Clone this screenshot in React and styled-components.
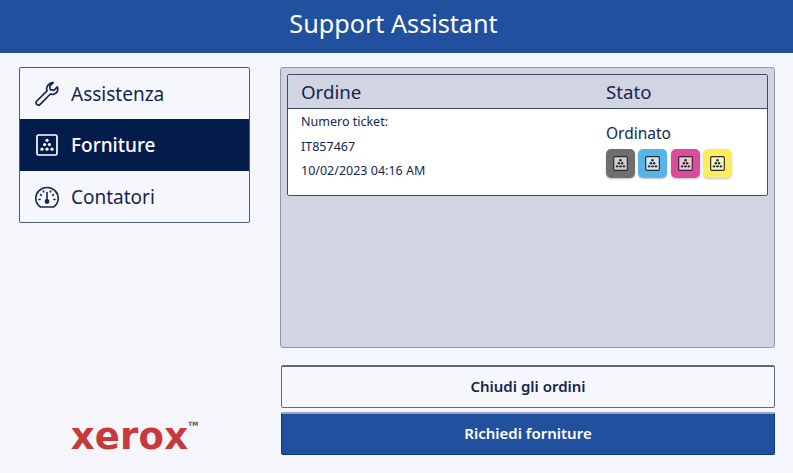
import React from 'react';
import styled, { createGlobalStyle } from 'styled-components';

const GlobalStyle = createGlobalStyle`
  html, body {
    margin: 0;
    padding: 0;
    height: 100%;
    background: #f5f6fb;
  }
  body {
    font-family: 'Noto Sans', 'Open Sans', sans-serif;
    color: #14264f;
  }
`;

const Page = styled.div`
  width: 793px;
  height: 473px;
  overflow: hidden;
  background: #f5f6fb;
`;

const Header = styled.header`
  height: 53px;
  padding-right: 6px;
  box-sizing: border-box;
  background: #20509e;
  color: #fff;
  font-size: 25.2px;
  line-height: 47px;
  text-align: center;
`;

const Body = styled.div`
  display: flex;
  padding: 14px 18px 0 19px;
  gap: 30px;
`;

const Left = styled.aside`
  width: 231px;
  height: 392px;
  display: flex;
  flex-direction: column;
  justify-content: space-between;
  align-items: center;
`;

const Menu = styled.nav`
  width: 100%;
  box-sizing: border-box;
  border: 1px solid #4b5a78;
  border-radius: 2px;
  background: #f6f7fc;
`;

const MenuItem = styled.div`
  height: ${p => (p.$active ? 52 : 51)}px;
  display: flex;
  align-items: center;
  gap: 11px;
  padding-left: 14px;
  font-size: 19px;
  font-weight: ${p => (p.$active ? 500 : 400)};
  color: ${p => (p.$active ? '#fff' : '#14264f')};
  background: ${p => (p.$active ? '#041c4c' : 'transparent')};
`;

const IconSlot = styled.span`
  width: 26px;
  height: 26px;
  display: flex;
  align-items: center;
  justify-content: center;
`;

const Logo = styled.div`
  display: flex;
  align-items: flex-start;
  color: #c8393c;
  font-family: 'DejaVu Sans', sans-serif;
  font-weight: 700;
  font-size: 37px;
  line-height: 40px;
  letter-spacing: 0.2px;
  margin-bottom: 2px;
`;

const Trademark = styled.span`
  color: #555;
  font-size: 6px;
  line-height: 14px;
  letter-spacing: 0;
`;

const Right = styled.main`
  flex: 1;
  display: flex;
  flex-direction: column;
`;

const Panel = styled.section`
  height: 281px;
  box-sizing: border-box;
  padding: 6px;
  background: #d1d5e1;
  border: 1px solid #8f97a9;
  border-radius: 3px;
`;

const Table = styled.div`
  border: 1px solid #3f4a63;
  border-radius: 2px;
  background: #fff;
`;

const Row = styled.div`
  display: grid;
  grid-template-columns: 305px 1fr;
  padding-left: 13px;
`;

const HeadRow = styled(Row)`
  height: 33px;
  align-items: center;
  background: #d1d5e1;
  border-bottom: 1px solid #3f4a63;
  font-size: 18.7px;
`;

const BodyRow = styled(Row)`
  height: 86px;
`;

const TicketInfo = styled.div`
  font-size: 12.5px;
  line-height: 24.5px;
  padding-top: 1px;
  color: #14264f;
`;

const Status = styled.div`
  padding-top: 13px;
  font-size: 15.5px;
  line-height: 22px;
`;

const Chips = styled.div`
  display: flex;
  gap: 3.3px;
  margin-top: 5px;
`;

const Chip = styled.div`
  width: 29px;
  height: 29px;
  border-radius: 5px;
  display: flex;
  align-items: center;
  justify-content: center;
  background: ${p => p.$color};
  box-shadow: 0 1px 2px rgba(0, 0, 0, 0.25);
`;

const Buttons = styled.div`
  display: flex;
  flex-direction: column;
  gap: 4px;
  margin-top: 17px;
  padding-left: 1px;
`;

const Button = styled.button`
  height: 43px;
  padding: 0 0 2px;
  box-sizing: border-box;
  border-radius: 2px;
  border: 1px solid ${p => (p.$primary ? '#163a78' : '#5d6880')};
  border-top: 2px solid ${p => (p.$primary ? '#9aa6bd' : '#5d6880')};
  background: ${p => (p.$primary ? '#20509e' : '#f6f7fc')};
  color: ${p => (p.$primary ? '#fff' : '#14264f')};
  font-family: inherit;
  font-size: 15px;
  font-weight: 600;
`;

const WrenchIcon = () => (
  <svg width="26" height="26" viewBox="0 0 26 26" fill="none" stroke="#14264f" strokeWidth="1.7" strokeLinejoin="round">
    <path d="M19.2 1.600l-3.400 3.500.5 3.600 3.600.6 3.500-3.400c.9 2.600.1 5-1.600 6.300-1.600 1.300-3.600 1.500-5.400.8L6.200 23.300c-1 1-2.500 1-3.400.1-1-.9-1-2.400 0-3.400L13 9.800c-.7-2-.3-4.200 1.200-5.900 1.300-1.600 3-2.600 5-2.300z" />
  </svg>
);

const SupplyIcon = ({ size = 22, color = '#14264f', fill = 'none', dot = 1.6 }) => (
  <svg width={size} height={size} viewBox="0 0 22 22">
    <rect x="1" y="1" width="20" height="20" rx="1.500" fill={fill} stroke={color} strokeWidth="1.700" />
    <g fill={color}>
      <circle cx="11" cy="6.300" r={dot} />
      <circle cx="8.600" cy="10.600" r={dot} />
      <circle cx="13.400" cy="10.600" r={dot} />
      <circle cx="6" cy="15.200" r={dot} />
      <circle cx="11" cy="15.200" r={dot} />
      <circle cx="16" cy="15.200" r={dot} />
    </g>
  </svg>
);

const GaugeIcon = () => (
  <svg width="26" height="26" viewBox="0 0 26 26" fill="none" stroke="#14264f" strokeWidth="1.600" strokeLinecap="round">
    <path d="M6.500 23C3.700 21.100 1.800 18 1.800 14.500 1.800 8.300 6.800 3.500 13 3.500s11.200 4.800 11.200 11c0 3.500-1.900 6.600-4.700 8.500z" />
    <path d="M13 16V8.500" />
    <circle cx="13" cy="17.500" r="1.600" fill="#14264f" />
    <path d="M6.500 10.500l.9.800M5 15.500h1.100M19.500 10.500l-.9.800M21 15.500h-1.100M9.300 7l.4.800M16.700 7l-.4.800" />
  </svg>
);

const chips = [
  { color: '#6e6e6e', fill: '#cfcfcf' },
  { color: '#58b4e8', fill: '#cfe8f7' },
  { color: '#de4a9c', fill: '#f3c3de' },
  { color: '#fbee5a', fill: '#fbf7c0' },
];

export default function App() {
  return (
    <Page>
      <GlobalStyle />
      <Header>Support Assistant</Header>
      <Body>
        <Left>
          <Menu>
            <MenuItem>
              <IconSlot><WrenchIcon /></IconSlot>
              Assistenza
            </MenuItem>
            <MenuItem $active>
              <IconSlot><SupplyIcon color="#fff" /></IconSlot>
              Forniture
            </MenuItem>
            <MenuItem>
              <IconSlot><GaugeIcon /></IconSlot>
              Contatori
            </MenuItem>
          </Menu>
          <Logo>
            xerox<Trademark>TM</Trademark>
          </Logo>
        </Left>
        <Right>
          <Panel>
            <Table>
              <HeadRow>
                <span>Ordine</span>
                <span>Stato</span>
              </HeadRow>
              <BodyRow>
                <TicketInfo>
                  <div>Numero ticket:</div>
                  <div>IT857467</div>
                  <div>10/02/2023 04:16 AM</div>
                </TicketInfo>
                <Status>
                  Ordinato
                  <Chips>
                    {chips.map(c => (
                      <Chip key={c.color} $color={c.color}>
                        <SupplyIcon size={15} color="#2a2a2a" fill={c.fill} dot={1.8} />
                      </Chip>
                    ))}
                  </Chips>
                </Status>
              </BodyRow>
            </Table>
          </Panel>
          <Buttons>
            <Button>Chiudi gli ordini</Button>
            <Button $primary>Richiedi forniture</Button>
          </Buttons>
        </Right>
      </Body>
    </Page>
  );
}
